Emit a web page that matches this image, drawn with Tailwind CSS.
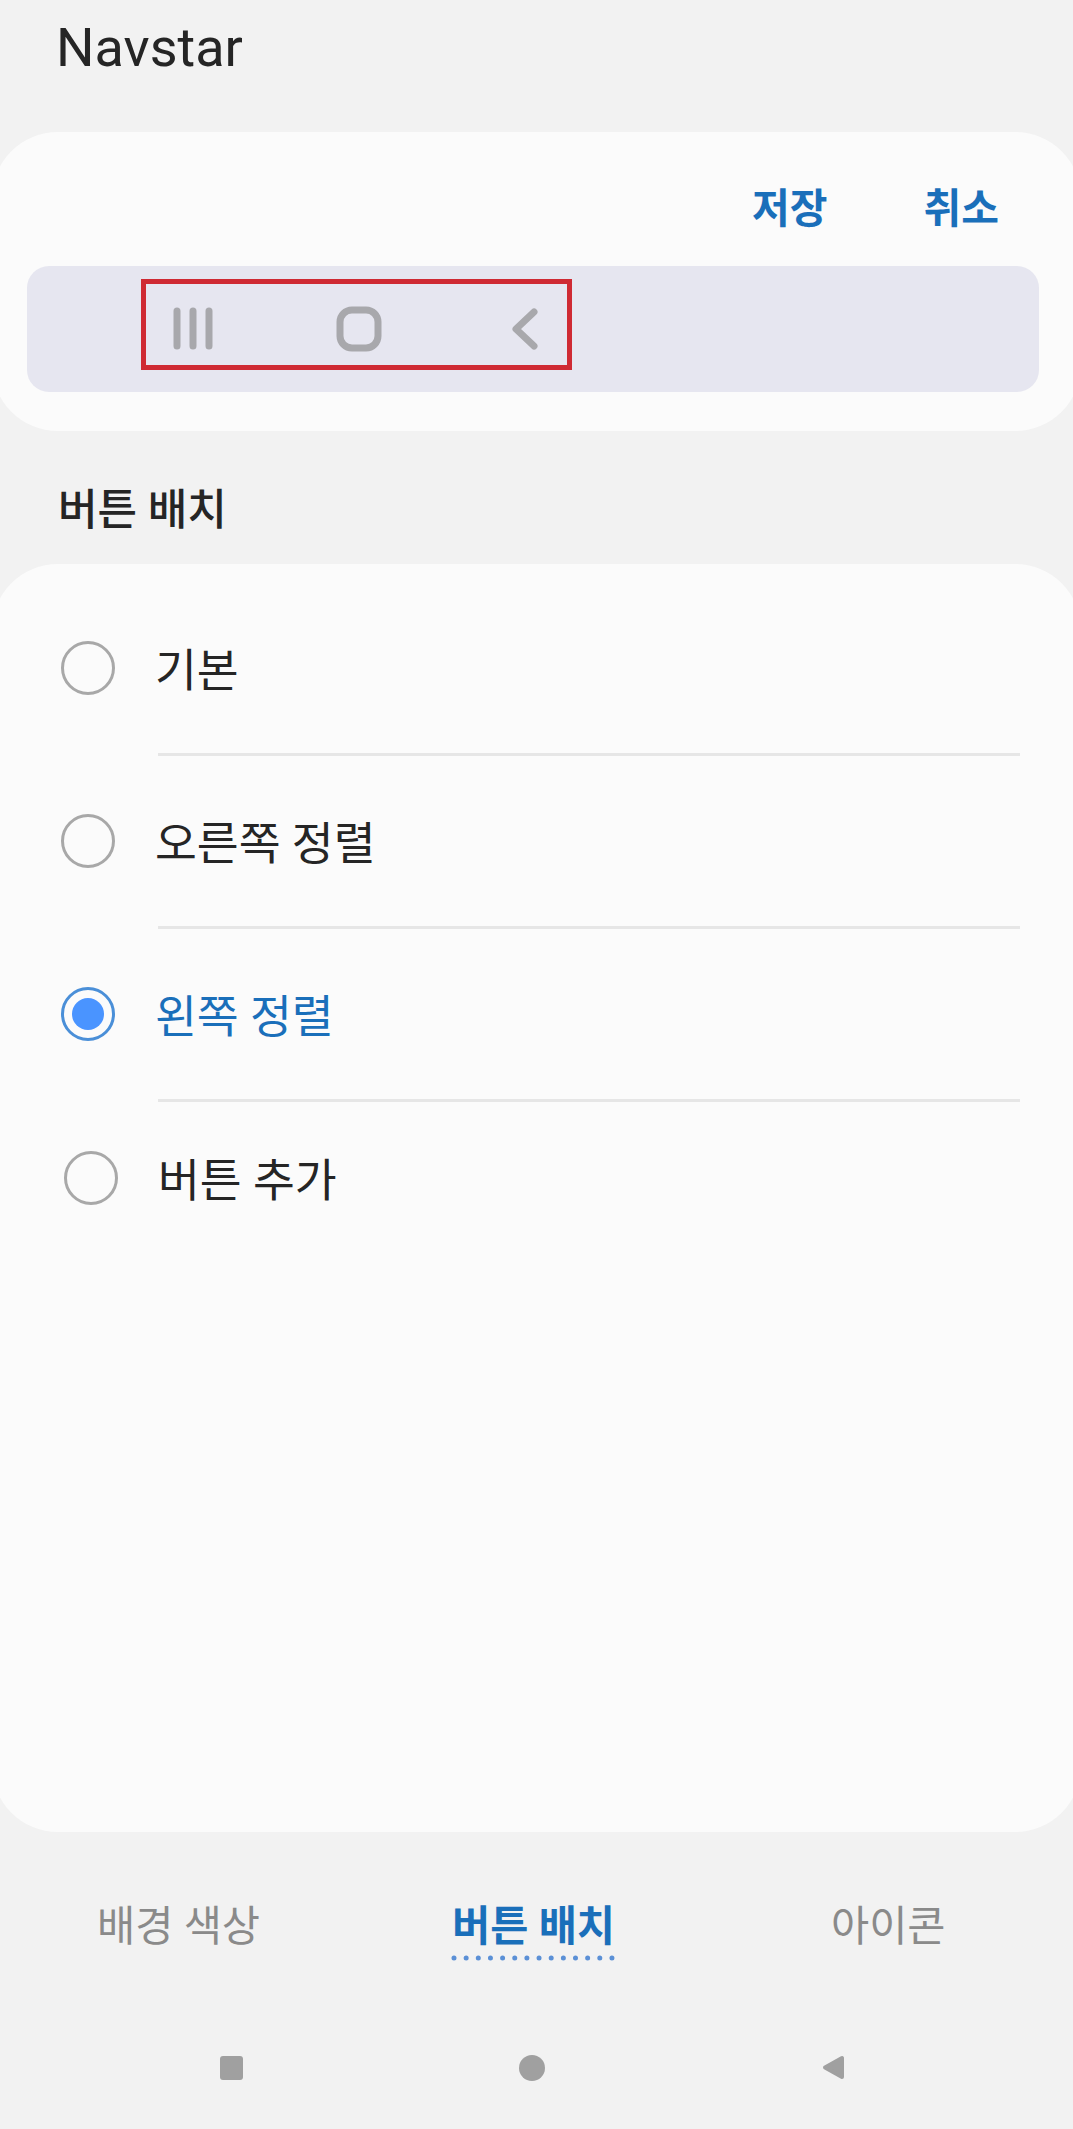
<!DOCTYPE html>
<html lang="ko">
<head>
  <meta charset="UTF-8" />
  <meta name="viewport" content="width=device-width, initial-scale=1.0" />
  <title>Navstar</title>
  <script src="https://cdn.jsdelivr.net/npm/@tailwindcss/browser@4"></script>
</head>
<body class="bg-[#f2f2f2] font-['Roboto','Noto_Sans_CJK_KR',sans-serif] text-[#252525]">
  <div class="w-[1073px] h-[2129px] flex flex-col overflow-hidden">

    <!-- title -->
    <div class="h-[132px] pl-[56px] pt-[18px]">
      <h1 class="text-[54px] leading-[60px] font-normal">Navstar</h1>
    </div>

    <!-- preview card -->
    <div class="h-[299px] -mx-[8px] bg-[#fbfbfb] rounded-[66px] pl-[35px] pr-[42px] flex flex-col">
      <div class="h-[134px] flex justify-end items-center gap-[96px] pr-[40px] pt-[22px] text-[41px] font-bold text-[#1a6fba]">
        <span>저장</span>
        <span>취소</span>
      </div>
      <div class="h-[126px] bg-[#e6e6f0] rounded-[22px] pl-[114px] pt-[13px]">
        <div class="w-[431px] h-[91px] border-[5px] border-[#cf2a33]">
          <svg width="421" height="81" viewBox="0 0 421 81" fill="none" stroke="#a8a8ac" stroke-linecap="round" stroke-linejoin="round">
            <path d="M31 27V62M47 27V62M63 27V62" stroke-width="7" />
            <rect x="194" y="26" width="38" height="38" rx="12" stroke-width="7" />
            <path d="M388 28L370 45L388 62" stroke-width="7" />
          </svg>
        </div>
      </div>
    </div>

    <!-- section label -->
    <div class="h-[133px] pl-[58px] pt-[51px]">
      <h2 class="text-[43px] leading-[56px] font-medium">버튼 배치</h2>
    </div>

    <!-- options -->
    <div class="h-[1268px] -mx-[8px] bg-[#fbfbfb] rounded-[66px] pt-[19px] text-[45.5px]">
      <div class="h-[170px] pl-[69px] flex items-center gap-[40px]">
        <span class="w-[54px] h-[54px] rounded-full border-[3px] border-[#a8a8a8]"></span>
        <span class="pt-[8px]">기본</span>
      </div>
      <div class="h-[3px] ml-[166px] mr-[61px] bg-[#e6e6e6]"></div>
      <div class="h-[170px] pl-[69px] flex items-center gap-[40px]">
        <span class="w-[54px] h-[54px] rounded-full border-[3px] border-[#a8a8a8]"></span>
        <span class="pt-[8px]">오른쪽 정렬</span>
      </div>
      <div class="h-[3px] ml-[166px] mr-[61px] bg-[#e6e6e6]"></div>
      <div class="h-[170px] pl-[69px] flex items-center gap-[40px]">
        <span class="w-[54px] h-[54px] rounded-full border-[3px] border-[#4a8fd8] flex items-center justify-center">
          <span class="w-[32px] h-[32px] rounded-full bg-[#4a94ff]"></span>
        </span>
        <span class="pt-[8px] text-[#1a6fba]">왼쪽 정렬</span>
      </div>
      <div class="h-[3px] ml-[166px] mr-[61px] bg-[#e6e6e6]"></div>
      <div class="h-[152px] pl-[72px] flex items-center gap-[40px]">
        <span class="w-[54px] h-[54px] rounded-full border-[3px] border-[#a8a8a8]"></span>
        <span class="pt-[8px]">버튼 추가</span>
      </div>
    </div>

    <!-- tabs -->
    <div class="h-[150px] grid grid-cols-[356px_354px_1fr] text-[41.5px] text-[#8a8a8a]">
      <div class="pl-[97px] pt-[67px] leading-[56px]">배경 색상</div>
      <div class="pl-[96px] pt-[67px] leading-[56px]">
        <div class="w-[164px] font-bold text-[#1a6fba] whitespace-nowrap">버튼 배치</div>
        <svg class="block -ml-[3px]" width="170" height="6" viewBox="0 0 170 6">
          <path d="M5 3H165" stroke="#5b90d6" stroke-width="5" stroke-linecap="round" stroke-dasharray="0 12.15" />
        </svg>
      </div>
      <div class="pl-[121px] pt-[67px] leading-[56px]">아이콘</div>
    </div>

    <!-- system nav bar -->
    <div class="flex-1 pl-[220px] pt-[73px] flex items-start gap-[276px]">
      <span class="w-[23px] h-[24px] mt-[1px] rounded-[3px] bg-[#a0a0a0]"></span>
      <span class="w-[26px] h-[26px] rounded-full bg-[#a0a0a0]"></span>
      <svg class="ml-[1px]" width="24" height="28" viewBox="0 0 24 28">
        <path d="M20 3V22L3 12.5Z" fill="#a0a0a0" stroke="#a0a0a0" stroke-width="4" stroke-linejoin="round" />
      </svg>
    </div>
  </div>
</body>
</html>
